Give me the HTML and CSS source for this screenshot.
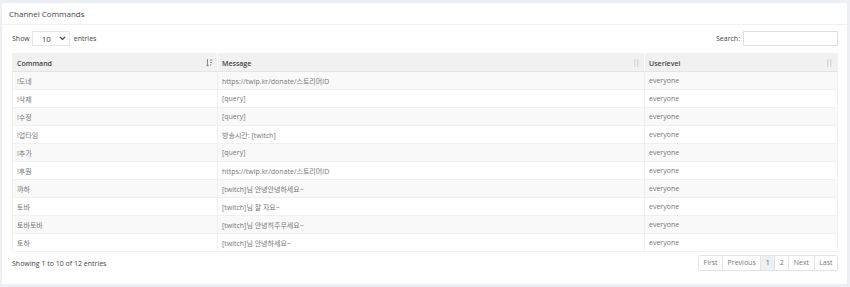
FILE: index.html
```html
<!DOCTYPE html>
<html lang="ko">
<head>
<meta charset="utf-8">
<link rel="stylesheet" href="styles.css">
</head>
<body>
<div class="box">
  <div class="box-header">Channel Commands</div>
  <div class="box-body">
    <div class="toolbar">
      <label class="length">Show
        <span class="select">10<svg width="7" height="5" viewBox="0 0 7 5"><path d="M1 1l2.5 2.5L6 1" fill="none" stroke="#444" stroke-width="1.2"/></svg></span>
        entries</label>
      <label class="search">Search: <span class="input"></span></label>
    </div>
    <table class="grid">
      <colgroup><col class="c1"><col class="c2"><col class="c3"></colgroup>
      <thead>
        <tr>
          <th><span>Command</span><svg class="sort active" width="7" height="8" viewBox="0 0 7 8"><path d="M1.5 0v7M0.3 5.8l1.2 1.4 1.2-1.4" fill="none" stroke="#8a8a8a" stroke-width="1"/><path d="M4 1h2.5M4 3.5h2M4 6h1.2" stroke="#8a8a8a" stroke-width="1"/></svg></th>
          <th><span>Message</span><svg class="sort" width="7" height="8" viewBox="0 0 7 8"><path d="M1.8 0v8M4.8 0v8" stroke="#cfcfcf" stroke-width="1"/></svg></th>
          <th><span>Userlevel</span><svg class="sort" width="7" height="8" viewBox="0 0 7 8"><path d="M1.8 0v8M4.8 0v8" stroke="#cfcfcf" stroke-width="1"/></svg></th>
        </tr>
      </thead>
      <tbody>
        <tr><td>!도네</td><td>https://twip.kr/donate/스트리머ID</td><td>everyone</td></tr>
        <tr><td>!삭제</td><td>[query]</td><td>everyone</td></tr>
        <tr><td>!수정</td><td>[query]</td><td>everyone</td></tr>
        <tr><td>!업타임</td><td>방송시간: [twitch]</td><td>everyone</td></tr>
        <tr><td>!추가</td><td>[query]</td><td>everyone</td></tr>
        <tr><td>!후원</td><td>https://twip.kr/donate/스트리머ID</td><td>everyone</td></tr>
        <tr><td>꺄하</td><td>[twitch]님 안녕안녕하세요~</td><td>everyone</td></tr>
        <tr><td>토바</td><td>[twitch]님 잘 자요~</td><td>everyone</td></tr>
        <tr><td>토바토바</td><td>[twitch]님 안녕히주무세요~</td><td>everyone</td></tr>
        <tr><td>토하</td><td>[twitch]님 안녕하세요~</td><td>everyone</td></tr>
      </tbody>
    </table>
    <div class="footer">
      <div class="info">Showing 1 to 10 of 12 entries</div>
      <ul class="pager">
        <li>First</li><li>Previous</li><li class="current">1</li><li>2</li><li>Next</li><li>Last</li>
      </ul>
    </div>
  </div>
</div>
</body>
</html>
```
FILE: styles.css
```css
html, body {
  margin: 0;
  padding: 0;
  background: #ecf0f5;
}
body {
  padding: 3px 3px 0 2px;
  font-family: "Open Sans", "Noto Sans CJK KR", sans-serif;
  font-size: 7px;
  color: #555;
}
.box {
  background: #fff;
  border-radius: 2px;
  height: 281px;
  box-sizing: border-box;
}
.box-header {
  height: 21px;
  line-height: 21px;
  padding-left: 7px;
  font-size: 8px;
  color: #444;
  border-bottom: 1px solid #f0f0f0;
}
.box-body {
  padding: 0 9px 0 10px;
}
.toolbar {
  display: flex;
  justify-content: space-between;
  align-items: center;
  height: 29px;
  margin-top: -1px;
}
.length, .search {
  display: flex;
  align-items: center;
  color: #444;
  font-size: 7px;
}
.select {
  display: inline-flex;
  align-items: center;
  justify-content: space-between;
  box-sizing: border-box;
  width: 38px;
  height: 15px;
  margin: 0 4px 0 2px;
  padding: 0 3px 0 9px;
  border: 1px solid #e6e6e6;
  font-size: 8px;
  color: #444;
}
.input {
  display: inline-block;
  box-sizing: border-box;
  width: 95px;
  height: 15px;
  margin-left: 3px;
  border: 1px solid #e0e0e0;
}
.grid {
  width: 100%;
  border-collapse: collapse;
  table-layout: fixed;
  border: 1px solid #f2f2f2;
}
.c1 { width: 205px; }
.c3 { width: 193px; }
.grid th {
  height: 17px;
  padding: 0 4px;
  background: #f1f1f1;
  text-align: left;
  font-weight: 600;
  font-size: 7px;
  color: #444;
  border-left: 1px solid #fff;
  border-bottom: 1px solid #e4e4e4;
}
.grid th:first-child { border-left: none; }
.grid th span { vertical-align: middle; }
.grid th .sort {
  float: right;
  margin-top: 1px;
}
.grid td {
  height: 17px;
  padding: 0 4px;
  border-top: 1px solid #f0f0f0;
  border-left: 1px solid #f0f0f0;
  color: #777;
  font-size: 7px;
  white-space: nowrap;
}
.grid td:first-child { border-left: none; }
.grid tbody tr:nth-child(odd) td { background: #f9f9f9; }
.footer {
  display: flex;
  justify-content: space-between;
  align-items: center;
  margin-top: 3px;
}
.info {
  font-size: 7px;
  color: #444;
}
.pager {
  display: flex;
  margin: 0;
  padding: 0;
  list-style: none;
  border: 1px solid #e4e4e4;
  border-radius: 2px;
}
.pager li {
  height: 14px;
  line-height: 14px;
  padding: 0 4.5px;
  font-size: 7px;
  color: #777;
  border-left: 1px solid #e4e4e4;
}
.pager li:first-child { border-left: none; }
.pager li.current {
  background: #eef0f2;
  color: #555;
}
```
